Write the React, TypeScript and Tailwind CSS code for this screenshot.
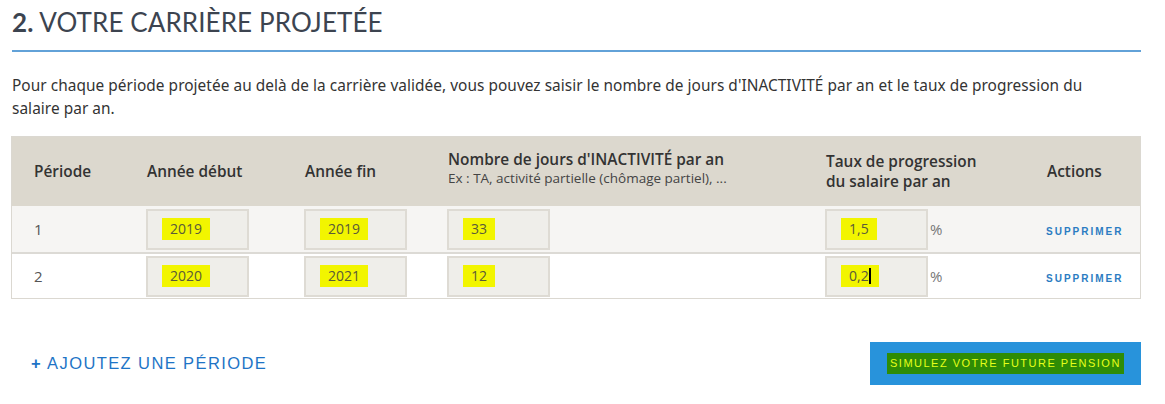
const rows = [
  { n: "1", debut: "2019", fin: "2019", jours: "33", taux: "1,5", bg: "bg-[#f6f5f3]", caret: false },
  { n: "2", debut: "2020", fin: "2021", jours: "12", taux: "0,2", bg: "bg-white", caret: true },
]

const Marked = ({ value, caret }: { value: string; caret?: boolean }) => {
  return (
    <div className="h-[41px] w-[103px] bg-[#efeeea] border-2 border-[#dedbd4] flex items-center pl-[14px]">
      <span className="bg-[#f2f500] px-[8px] py-[2px] text-[14px] text-[#5a5a3a] leading-[18px]">
        {value}
        {caret && <span className="inline-block w-[2px] h-[16px] bg-black align-middle -mt-[2px]" />}
      </span>
    </div>
  )
}

export default function App() {
  return (
    <div className="w-[1165px] h-[404px] bg-white text-[#333] font-['Open_Sans',sans-serif] overflow-hidden">
      <div className="pl-[11px] w-[1141px]">
        <h2 className="pt-[5px] h-[50px] text-[26px] leading-[34px] text-[#3c4450] tracking-[0.1px] font-['Lato',sans-serif] pl-[1px]">
          <span className="font-bold">2.</span> VOTRE CARRIÈRE PROJETÉE
        </h2>
        <div className="h-[2px] bg-[#62a2d8] ml-[1px]" />

        <p className="mt-[22px] text-[15.4px] leading-[23px] pl-[1px] font-['Noto_Sans',sans-serif] tracking-[0.05px]">
          Pour chaque période projetée au delà de la carrière validée, vous pouvez saisir le nombre de jours
          d'INACTIVITÉ par an et le taux de progression du
          <br />
          salaire par an.
        </p>

        <div className="mt-[16px] border border-[#dbd8d1]">
          <div className="grid grid-cols-[134px_158px_143px_378px_221px_1fr] h-[69px] bg-[#dcd8ce] items-center text-[15.4px] font-semibold text-[#333]">
            <div className="pl-[22px]">Période</div>
            <div className="pl-[1px]">Année début</div>
            <div className="pl-[1px]">Année fin</div>
            <div className="pl-[1px] leading-[18px] -mt-[6px]">
              <div>Nombre de jours d'INACTIVITÉ par an</div>
              <div className="text-[13.5px] font-normal text-[#444]">Ex : TA, activité partielle (chômage partiel), ...</div>
            </div>
            <div className="pl-[1px] leading-[20px]">
              Taux de progression
              <br />
              du salaire par an
            </div>
            <div className="pl-[1px]">Actions</div>
          </div>
          {rows.map((r, i) => (
            <div
              key={r.n}
              className={`grid grid-cols-[134px_158px_143px_378px_221px_1fr] h-[46px] items-center ${r.bg} ${i > 0 ? "border-t-2 border-[#dcdad5]" : ""}`}
            >
              <div className="pl-[22px] text-[15px] text-[#555]">{r.n}</div>
              <div><Marked value={r.debut} /></div>
              <div><Marked value={r.fin} /></div>
              <div><Marked value={r.jours} /></div>
              <div className="flex items-center">
                <Marked value={r.taux} caret={r.caret} />
                <span className="ml-[2px] text-[15px] text-[#777]">%</span>
              </div>
              <div>
                <button className="text-[10px] font-bold tracking-[2px] text-[#2b7cc2] font-['Liberation_Sans',sans-serif]">
                  SUPPRIMER
                </button>
              </div>
            </div>
          ))}
        </div>

        <div className="mt-[43px] flex items-center justify-between">
          <button className="ml-[20px] text-[16.5px] tracking-[1.4px] text-[#1e74c6] font-['Liberation_Sans',sans-serif]">
            <span className="font-bold">+</span> AJOUTEZ UNE PÉRIODE
          </button>
          <button className="w-[271px] h-[43px] bg-[#2893db] flex items-center pl-[17px]">
            <span className="bg-[#2e8c05] px-[3px] py-[2px] text-[11px] tracking-[1.5px] text-[#e6ff1a] font-['Liberation_Sans',sans-serif]">
              SIMULEZ VOTRE FUTURE PENSION
            </span>
          </button>
        </div>
      </div>
    </div>
  )
}
